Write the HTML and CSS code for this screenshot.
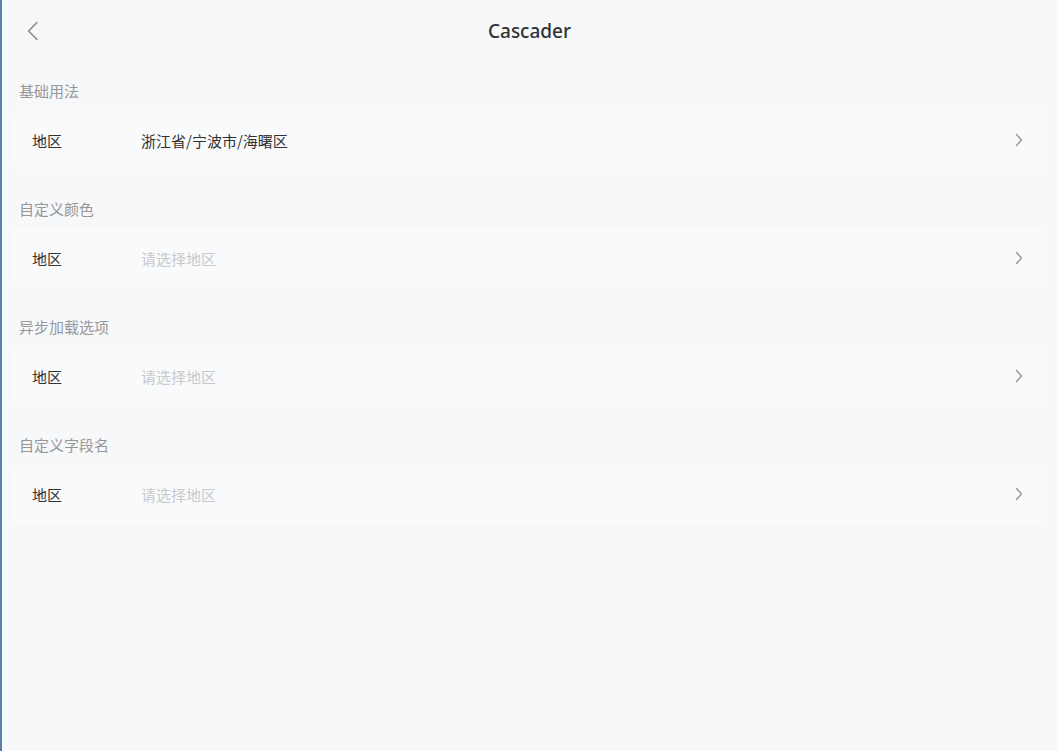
FILE: index.html
```html
<!DOCTYPE html>
<html lang="zh">
<head>
<meta charset="utf-8">
<title>Cascader</title>
<link rel="stylesheet" href="styles.css">
</head>
<body>
<div class="page">
  <header class="nav">
    <span class="nav-back">
      <svg width="14" height="20" viewBox="0 0 14 20"><path d="M11 1.5 L2.5 10 L11 18.5" fill="none" stroke="#8a8b8d" stroke-width="1.6" stroke-linecap="round" stroke-linejoin="round"/></svg>
    </span>
    <h1 class="nav-title">Cascader</h1>
  </header>

  <section class="section">
    <h2 class="section-title">基础用法</h2>
    <div class="card">
      <span class="cell-label">地区</span>
      <span class="cell-value">浙江省/宁波市/海曙区</span>
      <svg class="cell-arrow" width="8" height="14" viewBox="0 0 8 14"><path d="M1.5 1.5 L6.5 7 L1.5 12.5" fill="none" stroke="#969799" stroke-width="1.4" stroke-linecap="round" stroke-linejoin="round"/></svg>
    </div>
  </section>

  <section class="section">
    <h2 class="section-title">自定义颜色</h2>
    <div class="card">
      <span class="cell-label">地区</span>
      <span class="cell-value placeholder">请选择地区</span>
      <svg class="cell-arrow" width="8" height="14" viewBox="0 0 8 14"><path d="M1.5 1.5 L6.5 7 L1.5 12.5" fill="none" stroke="#969799" stroke-width="1.4" stroke-linecap="round" stroke-linejoin="round"/></svg>
    </div>
  </section>

  <section class="section">
    <h2 class="section-title">异步加载选项</h2>
    <div class="card">
      <span class="cell-label">地区</span>
      <span class="cell-value placeholder">请选择地区</span>
      <svg class="cell-arrow" width="8" height="14" viewBox="0 0 8 14"><path d="M1.5 1.5 L6.5 7 L1.5 12.5" fill="none" stroke="#969799" stroke-width="1.4" stroke-linecap="round" stroke-linejoin="round"/></svg>
    </div>
  </section>

  <section class="section">
    <h2 class="section-title">自定义字段名</h2>
    <div class="card">
      <span class="cell-label">地区</span>
      <span class="cell-value placeholder">请选择地区</span>
      <svg class="cell-arrow" width="8" height="14" viewBox="0 0 8 14"><path d="M1.5 1.5 L6.5 7 L1.5 12.5" fill="none" stroke="#969799" stroke-width="1.4" stroke-linecap="round" stroke-linejoin="round"/></svg>
    </div>
  </section>
</div>
</body>
</html>
```

FILE: styles.css
```css
html, body {
  margin: 0;
  padding: 0;
  height: 100%;
}

body {
  background: #f7f8fa;
  font-family: "Noto Sans", "Noto Sans CJK SC", sans-serif;
  color: #323233;
  border-left: 2px solid #5a80a6;
  box-sizing: border-box;
}

.page {
  min-height: 100%;
}

.nav {
  height: 62px;
  display: flex;
  align-items: center;
  justify-content: center;
  position: relative;
}

.nav-back {
  position: absolute;
  left: 24px;
  top: 21px;
  display: flex;
}

.nav-title {
  margin: 0;
  font-size: 19px;
  font-weight: 500;
  color: #323233;
  line-height: 24px;
}

.section {
  padding: 29px 10px 0 10px;
}

.section:nth-child(2) {
  padding-top: 19px;
}

.section-title {
  margin: 0 0 9px 7px;
  font-size: 15px;
  font-weight: 400;
  line-height: 20px;
  color: #969799;
  font-family: "Noto Sans CJK SC", sans-serif;
}

.card {
  height: 60px;
  background: #f9fafb;
  border-radius: 10px;
  display: flex;
  align-items: center;
  padding: 0 24px 0 20px;
  font-family: "Noto Sans CJK SC", sans-serif;
  font-size: 15px;
}

.cell-label {
  width: 109px;
  color: #323233;
}

.cell-value {
  flex: 1;
  color: #323233;
}

.cell-value.placeholder {
  color: #c8c9cc;
}

.cell-arrow {
  display: block;
}
```
